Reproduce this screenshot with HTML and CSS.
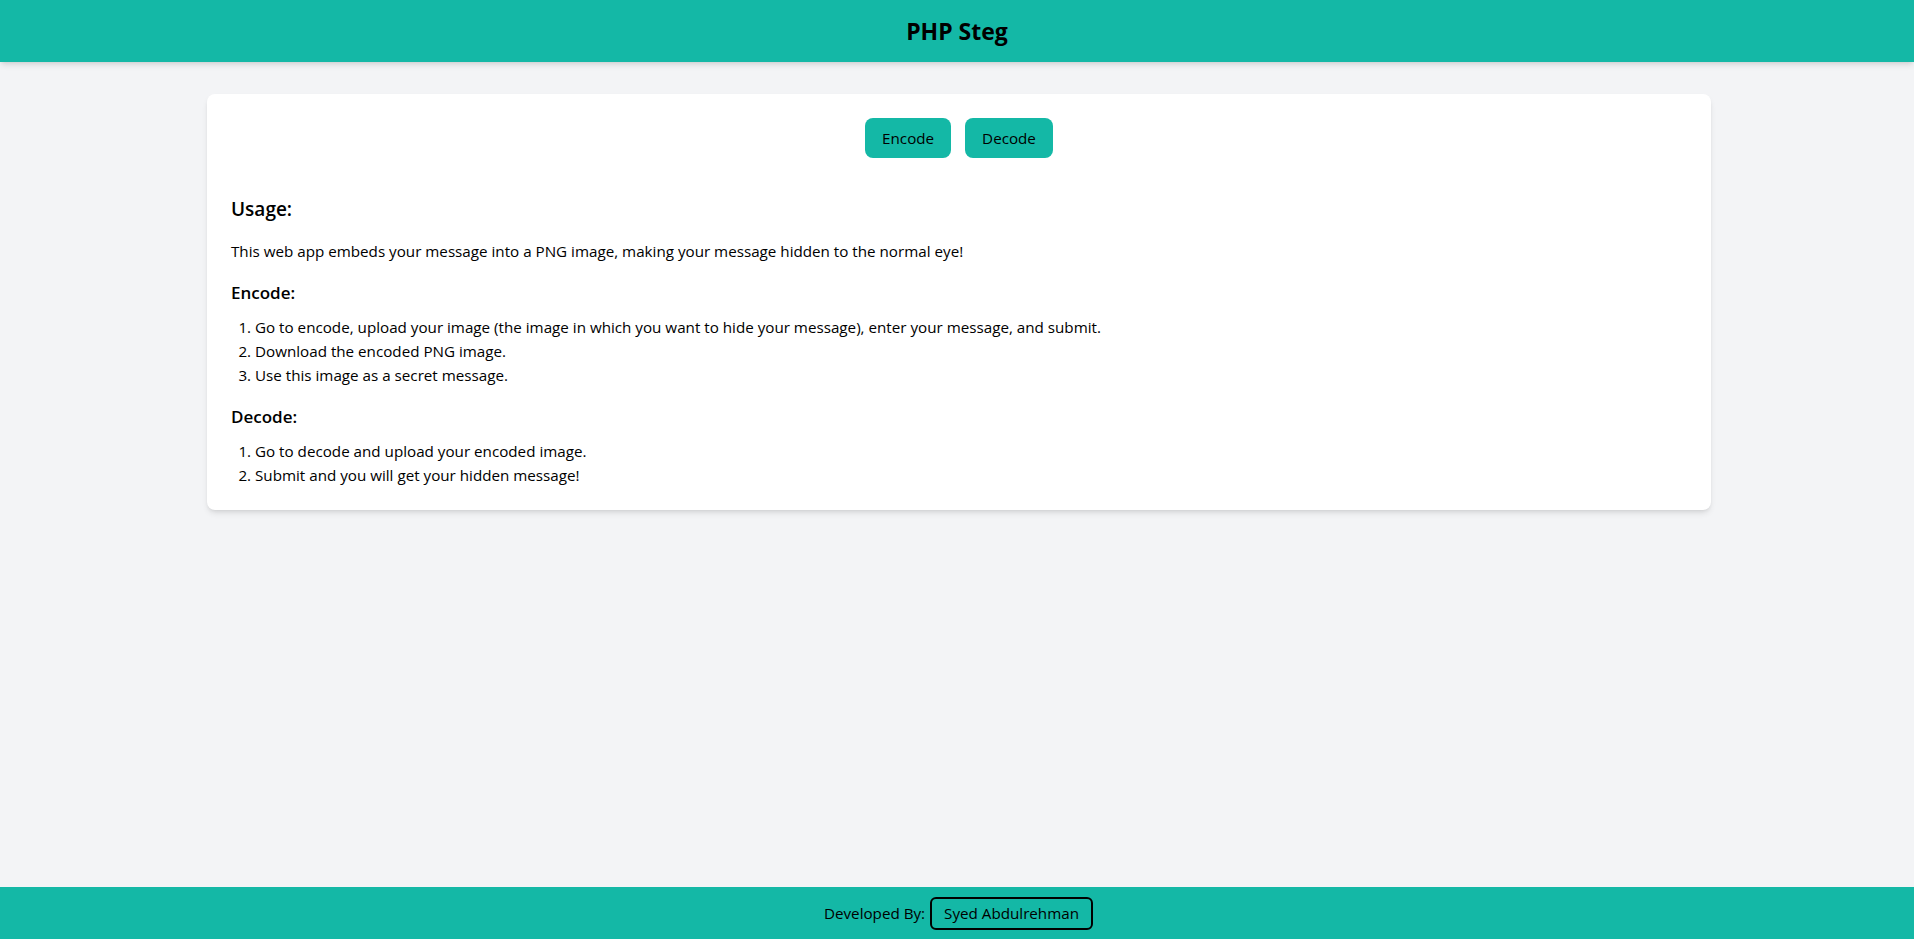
FILE: index.html
```html
<!DOCTYPE html>
<html lang="en">
<head>
<meta charset="utf-8">
<title>PHP Steg</title>
<link rel="stylesheet" href="styles.css">
</head>
<body>
<header class="site-header">
  <h1 class="site-title">PHP Steg</h1>
</header>
<main class="container">
  <section class="card">
    <div class="actions">
      <a class="btn" href="#">Encode</a>
      <a class="btn" href="#">Decode</a>
    </div>
    <h2 class="usage-title">Usage:</h2>
    <p class="intro">This web app embeds your message into a PNG image, making your message hidden to the normal eye!</p>
    <h3 class="sub-title">Encode:</h3>
    <ol class="steps">
      <li>Go to encode, upload your image (the image in which you want to hide your message), enter your message, and submit.</li>
      <li>Download the encoded PNG image.</li>
      <li>Use this image as a secret message.</li>
    </ol>
    <h3 class="sub-title">Decode:</h3>
    <ol class="steps">
      <li>Go to decode and upload your encoded image.</li>
      <li>Submit and you will get your hidden message!</li>
    </ol>
  </section>
</main>
<footer class="site-footer">
  <span class="dev-label">Developed By:</span>
  <a class="dev-name" href="#">Syed Abdulrehman</a>
</footer>
</body>
</html>
```

FILE: styles.css
```css
* { box-sizing: border-box; }
html, body { margin: 0; padding: 0; }
body {
  font-family: "Open Sans", "Noto Sans", sans-serif;
  background: #f3f4f6;
  color: #000;
  min-height: 100vh;
  display: flex;
  flex-direction: column;
}
.site-header {
  background: #14b8a6;
  height: 62px;
  display: flex;
  align-items: center;
  justify-content: center;
  box-shadow: 0 4px 6px -1px rgba(0,0,0,0.1), 0 2px 4px -2px rgba(0,0,0,0.1);
  position: relative;
  z-index: 1;
}
.site-title {
  margin: 0;
  font-size: 23px;
  font-weight: 700;
  line-height: 30px;
}
.container {
  flex: 1;
  width: 100%;
  max-width: 1536px;
  margin: 0 auto;
  padding: 32px 14px 0 18px;
}
.card {
  background: #fff;
  border-radius: 8px;
  box-shadow: 0 4px 6px -1px rgba(0,0,0,0.1), 0 2px 4px -2px rgba(0,0,0,0.1);
  padding: 24px 24px 23px;
}
.actions {
  display: flex;
  justify-content: center;
  gap: 14px;
  margin-bottom: 37px;
}
.btn {
  display: inline-block;
  background: #14b8a6;
  color: #000;
  text-decoration: none;
  font-size: 15.2px;
  line-height: 24px;
  padding: 8px 17px;
  border-radius: 8px;
}
.usage-title {
  margin: 0 0 16px;
  font-size: 19px;
  line-height: 28px;
  font-weight: 600;
}
.intro {
  margin: 0 0 16px;
  font-size: 15.2px;
  line-height: 24px;
}
.sub-title {
  margin: 0 0 8px;
  font-size: 17px;
  line-height: 28px;
  font-weight: 600;
}
.steps {
  margin: 0 0 16px;
  padding-left: 24px;
  font-size: 15.2px;
  line-height: 24px;
}
.steps li { margin-top: 0; }
.steps:last-child { margin-bottom: 0; }
.site-footer {
  background: #14b8a6;
  height: 52px;
  display: flex;
  align-items: center;
  justify-content: center;
  gap: 5px;
  font-size: 15.2px;
  padding-left: 3px;
}
.dev-name {
  color: #000;
  text-decoration: none;
  border: 2px solid #000;
  border-radius: 6px;
  padding: 4px 12px;
  line-height: 21px;
}
```
